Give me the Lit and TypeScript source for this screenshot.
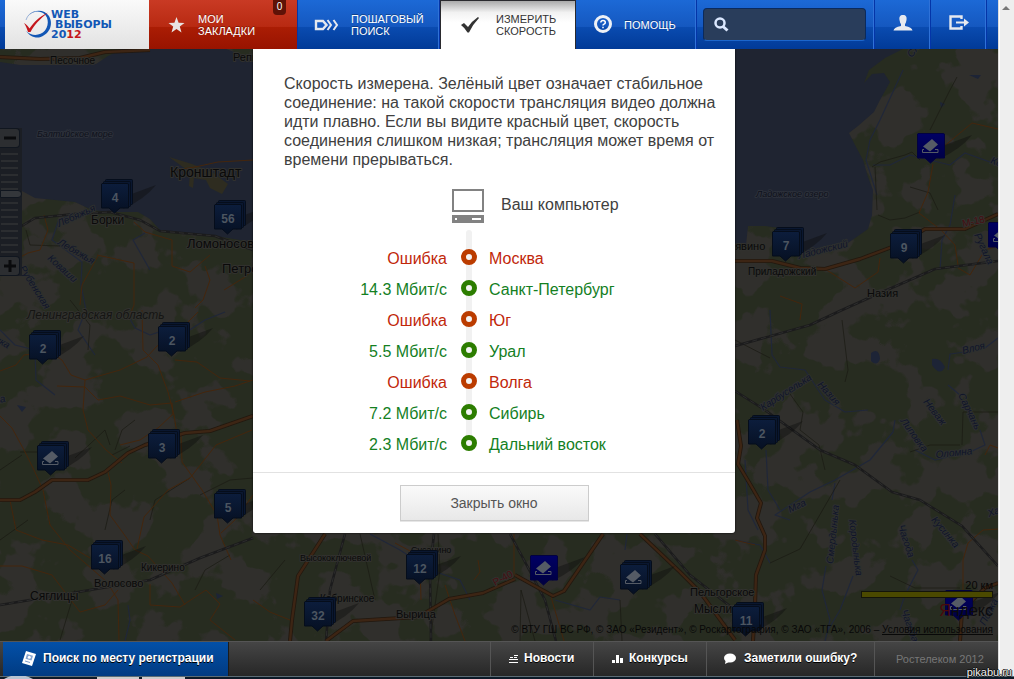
import { LitElement, html, svg, css } from "lit";
import { customElement } from "lit/decorators.js";
import { classMap } from "lit/directives/class-map.js";

type Result = { speed: string; city: string; ok: boolean };
type Pin = { x: number; y: number; n?: string; single?: boolean };
type Label = { x: number; y: number; t: string; s?: number; r?: number; kind?: string };

const RESULTS: Result[] = [
  { speed: "Ошибка", city: "Москва", ok: false },
  { speed: "14.3 Мбит/с", city: "Санкт-Петербург", ok: true },
  { speed: "Ошибка", city: "Юг", ok: false },
  { speed: "5.5 Мбит/с", city: "Урал", ok: true },
  { speed: "Ошибка", city: "Волга", ok: false },
  { speed: "7.2 Мбит/с", city: "Сибирь", ok: true },
  { speed: "2.3 Мбит/с", city: "Дальний восток", ok: true },
];

const PINS: Pin[] = [
  { x: 101, y: 183, n: "4" }, { x: 214, y: 204, n: "56" }, { x: 29, y: 334, n: "2" },
  { x: 158, y: 326, n: "2" }, { x: 148, y: 433, n: "3" }, { x: 37, y: 445 },
  { x: 214, y: 493, n: "5" }, { x: 91, y: 544, n: "16" }, { x: 406, y: 554, n: "12" },
  { x: 304, y: 601, n: "32" }, { x: 620, y: 564 }, { x: 530, y: 555, single: true },
  { x: 772, y: 231, n: "7" }, { x: 890, y: 233, n: "9" }, { x: 748, y: 419, n: "2" },
  { x: 732, y: 606, n: "11" }, { x: 917, y: 133, single: true },
  { x: 988, y: 222, single: true }, { x: 945, y: 590, single: true },
];

const LABELS: Label[] = [
  { x: 50, y: 64, t: "Песочное", s: 10 },
  { x: 233, y: 61, t: "Репино", s: 11 },
  { x: 37, y: 137, t: "Балтийское море", s: 9, kind: "sea" },
  { x: 170, y: 177, t: "Кронштадт", s: 14 },
  { x: 91, y: 224, t: "Борки", s: 12 },
  { x: 187, y: 248, t: "Ломоносов", s: 13 },
  { x: 222, y: 273, t: "Петродворец", s: 13 },
  { x: 27, y: 319, t: "Ленинградская область", s: 12, kind: "region" },
  { x: 59, y: 227, t: "Лебяжья", s: 10, r: -24, kind: "river" },
  { x: 57, y: 244, t: "Лебяжья", s: 10, r: 30, kind: "river" },
  { x: 47, y: 259, t: "Коваши", s: 10, r: 42, kind: "river" },
  { x: 19, y: 268, t: "Рубенская", s: 10, r: 58, kind: "river" },
  { x: -6, y: 341, t: "нка", s: 10, r: 30, kind: "river" },
  { x: -4, y: 404, t: "ка", s: 10, r: -14, kind: "river" },
  { x: 141, y: 571, t: "Кикерино", s: 10 },
  { x: 94, y: 587, t: "Волосово", s: 11 },
  { x: 30, y: 600, t: "Сяглицы", s: 12 },
  { x: 300, y: 561, t: "Высокоключевой", s: 9 },
  { x: 411, y: 553, t: "Сусанино", s: 9 },
  { x: 320, y: 602, t: "Кобринское", s: 10 },
  { x: 396, y: 618, t: "Вырица", s: 11 },
  { x: 495, y: 586, t: "Р-40", s: 10, r: -28, kind: "road" },
  { x: 690, y: 596, t: "Пельгорское", s: 11 },
  { x: 694, y: 613, t: "Мыслино", s: 12 },
  { x: 756, y: 197, t: "Ладожское озеро", s: 9, kind: "sea" },
  { x: 715, y: 250, t: "Синявино", s: 11 },
  { x: 748, y: 275, t: "Приладожский", s: 10 },
  { x: 799, y: 259, t: "Ладожский", s: 10, r: -14, kind: "river" },
  { x: 867, y: 297, t: "Назия", s: 11 },
  { x: 963, y: 227, t: "М-18", s: 10, r: -12, kind: "road" },
  { x: 912, y: 58, t: "Слю", s: 10, r: -55, kind: "river" },
  { x: 974, y: 235, t: "Ругала", s: 10, r: 65, kind: "river" },
  { x: 990, y: 163, t: "Кобона", s: 10, r: 20, kind: "river" },
  { x: 763, y: 411, t: "Карбуселька", s: 10, r: -33, kind: "river" },
  { x: 817, y: 385, t: "Назия", s: 10, r: 48, kind: "river" },
  { x: 963, y: 354, t: "Влоя", s: 10, r: -14, kind: "river" },
  { x: 923, y: 402, t: "Неваж", s: 10, r: 52, kind: "river" },
  { x: 958, y: 395, t: "Сарчань", s: 10, r: 64, kind: "river" },
  { x: 900, y: 421, t: "Липовка", s: 10, r: 54, kind: "river" },
  { x: 936, y: 458, t: "Оломна", s: 10, r: -6, kind: "river" },
  { x: 790, y: 513, t: "Мга", s: 10, r: -26, kind: "river" },
  { x: 833, y: 564, t: "Смердынька", s: 10, r: -84, kind: "river" },
  { x: 849, y: 520, t: "Кородынька", s: 10, r: 83, kind: "river" },
  { x: 898, y: 526, t: "Чагода", s: 10, r: 72, kind: "river" },
  { x: 931, y: 520, t: "Кусинка", s: 10, r: 50, kind: "river" },
  { x: 989, y: 517, t: "Хала", s: 10, r: -20, kind: "river" },
  { x: 901, y: 611, t: "Чагода", s: 10, r: 70, kind: "river" },
  { x: 985, y: 626, t: "Полка", s: 10, r: -62, kind: "river" },
];

const WATER = [
  "M0 62 L20 65 L60 65 L96 64 L108 56 L122 49 L226 49 L240 54 L260 62 V246 L240 240 L215 236 L180 233 L160 230 L150 219 L138 212 L110 212 L92 210 L75 202 L35 198 L22 191 L0 193Z",
  "M734 49 H903 L885 58 L869 70 L864 83 L872 74 L884 73 L890 82 L880 100 L874 112 L858 126 L849 133 L855 145 L863 160 L868 177 L873 190 L872 215 L868 229 L848 243 L820 251 L800 254 L782 252 L780 228 L765 226 L748 226 L746 245 L734 246Z",
];

const HIGHWAYS = [
  "M0 57 L40 59 L80 58 L105 52 L150 50",
  "M0 500 L20 500 L35 492 L52 480 L88 480 L105 472 L128 453 L145 445 L185 433 L210 431 L253 416",
  "M735 261 L772 261 L800 268 L825 269 L860 259 L900 244 L925 229 L965 229 L998 214",
  "M737 420 L741 446 L738 464 L750 484 L761 503 L757 518 L765 536 L765 550 L756 575 L755 605 L753 641",
  "M325 534 L298 576 L292 620 L290 641",
  "M326 641 L353 621 L418 617 L449 599 L483 593 L515 579",
  "M515 575 L553 596 L564 591 L603 534",
  "M640 534 L680 572 L700 592 L735 640",
  "M960 641 L962 610 L985 588 L998 583",
];

const ROADS = [
  "M0 371 L16 365 L24 355 L50 352 L62 360 L71 375 L85 380 L120 370 L147 357 L157 346 L180 330 L198 312",
  "M57 386 L85 387 L98 400 L120 396 L150 405 L172 403 L173 414 L158 428 L140 440 L120 445",
  "M142 310 L143 350 L158 365 L168 392 L174 415 L177 434",
  "M175 360 L197 362 L220 378 L250 381",
  "M175 402 L205 392 L235 386 L253 380",
  "M85 380 L83 410 L88 430 L106 450 L122 463",
  "M0 416 L12 428 L24 450 L34 470 L43 490 L50 525 L70 550 L107 582 L118 600 L119 641",
  "M10 500 L16 530 L42 540 L68 545 L90 558",
  "M107 468 L111 485 L110 515 L126 537 L135 550 L148 556 L172 583 L185 605",
  "M181 434 L182 462 L202 490 L217 515 L220 535 L231 560",
  "M221 533 L235 520 L253 495", "M137 549 L144 517 L168 490 L190 478 L216 445 L252 430",
  "M0 566 L22 566 L52 575 L80 612 L105 605 L118 590", "M150 584 L150 605 L180 607 L206 590 L220 604 L210 620 L235 640",
  "M97 255 L134 263 L134 305 L128 320", "M134 222 L145 232 L172 240 L172 266 L190 272 L210 255",
  "M98 256 L82 285 L80 305", "M44 215 L48 230 L40 250 L28 253 L0 268",
  "M170 171 L195 167 L218 162 L253 160", "M205 266 L210 280 L203 300 L195 308",
  "M224 290 L245 277 L253 270", "M253 600 L270 612 L290 620", "M395 543 L412 552 L420 565 L421 600",
  "M474 580 L480 572 L478 560", "M514 534 L514 575", "M445 585 L455 615 L465 641", "M551 597 L564 641",
  "M933 164 L928 192 L919 213 L941 230 L955 245 L958 265", "M942 148 L972 123 L998 129",
  "M958 268 L970 275 L985 250 L998 246", "M825 269 L855 288 L878 272 L880 258",
  "M780 296 L802 304 L800 320", "M968 543 L963 560 L963 590", "M968 543 L983 530 L998 529",
  "M735 540 L755 545 M985 455 L990 445 L998 448",
];

const TRACKS = [
  "M26 230 L30 245 L60 246 M70 300 L90 325 L88 350 M115 450 L122 430 L135 420 M130 446 L112 455",
  "M75 458 L105 430 L110 445 M60 470 L48 452 L20 452 M125 490 L112 500 L105 530",
  "M150 520 L155 500 L190 478 M200 495 L230 480 L253 478 M195 590 L205 570 L230 555",
  "M735 340 L770 358 M842 320 L848 370 L845 382 M790 394 L803 412 L800 430 L819 445 L825 470",
  "M872 167 L880 162 L905 155 L912 152 L920 160 M878 215 L890 220 L905 218 L920 212",
  "M930 130 L950 90 L957 77 M910 187 L930 193 L938 210 M875 167 L877 210",
  "M963 412 L980 412 L998 412 M963 412 L962 445 M910 452 L930 445 L960 445",
  "M890 576 L915 588 L940 588 L960 588 M770 563 L800 549 L840 480",
  "M520 641 L521 590 L535 641 M430 641 L440 570 L438 534 M620 600 L622 641",
  "M0 470 L22 455 M0 540 L28 520 M60 640 L75 590 M260 590 L285 560 M360 534 L375 600",
];

const RAILS = [
  "M0 239 L35 218 L75 214 L110 212 L140 220 L160 231 L215 236 L253 250",
  "M0 605 L60 595 L150 580 L200 558 L253 538",
  "M735 346 L810 325 L842 310 L880 293 L935 269 L998 261",
  "M735 391 L765 410 L820 450 L855 465 L892 492 L920 500 L962 526 L998 566",
  "M345 534 L330 590 L326 641", "M434 534 L430 570 L431 641", "M510 534 L524 560 L545 600 L556 641",
  "M655 534 L690 575 L735 610",
];

const RIVERS = [
  "M70 214 L58 222 L52 240 L82 262 L81 285 L86 310 L78 330 L95 355",
  "M125 310 L135 328 L150 335 L165 330 L185 333 L205 320 L225 312",
  "M0 330 L15 345 L35 350 L36 380 L55 395", "M150 270 L133 240 L145 233", "M128 605 L130 620 L125 641",
  "M770 310 L772 355 L780 367 L805 370 L825 400 L845 412 L868 410", "M895 420 L893 432 L870 460 L835 480 L810 492 L775 515 L790 520",
  "M766 450 L768 490 L780 510", "M835 483 L832 500 M826 566 L822 590 L830 620 L825 641 M853 576 L840 610 L828 630",
  "M912 560 L918 570 L905 595 L900 610", "M948 370 L950 354 L965 352 M985 348 L998 338",
  "M948 385 L960 395 M980 430 L985 445 L970 452 L935 460 L915 450", "M873 165 L890 165 L910 155 L950 165 L965 153 L998 165",
  "M903 70 L880 120 L870 140 L866 160 L877 195", "M955 195 L950 225 L942 240 L940 270",
  "M370 534 L400 550 L430 570 L460 580 L470 600", "M555 600 L590 610 L600 597 L620 600 M627 534 L625 550",
  "M735 540 L760 545 L770 563 M745 460 L748 510 L758 530",
];

@customElement("vote-map")
export class VoteMap extends LitElement {
  static styles = css`
    :host { display: block; position: absolute; inset: 0; overflow: hidden; background: #272c20; font-family: "Liberation Sans", Arial, sans-serif; }
    .canvas { display: block; width: 100%; height: 100%; }
    .water { fill: #1f2431; }
    .line { fill: none; stroke-linejoin: round; }
    .casing { stroke: #22180f; stroke-width: 4; }
    .highway { stroke: #3d2514; stroke-width: 2.4; }
    .road { stroke: #44260d; stroke-width: 1; }
    .track { stroke: #191913; stroke-width: 1; opacity: .7; }
    .rail { stroke: #1b1b1c; stroke-width: 2.5; }
    .ties { stroke: #2c2c2c; stroke-width: 1; stroke-dasharray: 5 4; }
    .river { stroke: #202739; stroke-width: 1.2; }
    .label { fill: #0a0a0a; stroke: #31312e; stroke-width: 2; paint-order: stroke; stroke-linejoin: round; }
    .sea { fill: #0e111a; stroke: #2c303a; font-style: italic; }
    .river-name { fill: #10152a; stroke: #2e302f; font-style: italic; }
    .region { fill: #151513; font-style: italic; }
    .road-name { fill: #460f12; }
    .count { fill: #4c5560; font-size: 12px; font-weight: bold; text-anchor: middle; }
    .zoom { position: absolute; left: 0; top: 79px; width: 22px; display: flex; flex-direction: column; background: #1b1e24; }
    .step { box-sizing: border-box; width: 20px; height: 20px; padding: 0; border: 1px solid #10161f; border-left: 0; border-radius: 0 4px 4px 0; background: #2c2e31; display: grid; place-items: center; }
    .range { appearance: none; -webkit-appearance: none; writing-mode: vertical-lr; width: 22px; height: 108px; margin: 0; background: repeating-linear-gradient(#0000 0 5px, #2b2d30 5px 7px) 1px 0 / 17px 100% no-repeat; }
    .range::-webkit-slider-thumb { appearance: none; -webkit-appearance: none; box-sizing: border-box; width: 22px; height: 8px; border: 1px solid #10161f; border-radius: 0 4px 4px 0; background: #34373b; }
    .legend { position: absolute; right: 5px; bottom: 5px; display: flex; flex-direction: column; align-items: flex-end; color: #080808; font-size: 10px; line-height: 12px; white-space: nowrap; }
    .scale { font-size: 11px; line-height: 12px; }
    .bar { box-sizing: border-box; width: 132px; height: 7px; border: 1px solid #14140a; background: #4b4900; }
    .brand { font-size: 16px; line-height: 26px; color: #0b0b0d; }
    .brand-mark { color: #4a090c; }
    .terms { color: inherit; }
  `;

  private pin(p: Pin) {
    const fill = p.single ? "url(#bright)" : "url(#dim)";
    const edge = p.single ? "#020240" : "#050d1b";
    return svg`<g transform="translate(${p.x} ${p.y})">
      <path d="M28 12 L55 2 Q44 16 22 26Z" fill="#0c0d0c" opacity=".4"></path>
      ${p.single ? null : svg`<rect x="4.5" y="-3.5" width="27" height="25" rx="1" fill="#0a1730" stroke=${edge}></rect>
        <rect x="2.5" y="-1.5" width="27" height="25" rx="1" fill="#0a1730" stroke=${edge}></rect>`}
      <path d="M1 .5 H26 L27.5 1 V25 H19 L13.500 30 L8 25 H.5 V1Z" fill=${fill} stroke=${edge}></path>
      ${p.n
        ? svg`<text class="count" x="14" y="19">${p.n}</text>`
        : svg`<path d="M6 13.500 L15 6 L21 11.500 L13 18.500Z" fill="#555b65"></path>
            <path d="M7 16.500 H5.500 V19.500 H21 V16.500 H18" fill="none" stroke="#555b65"></path>`}
    </g>`;
  }

  private label(l: Label) {
    const cls = classMap({ label: true, sea: l.kind === "sea", "river-name": l.kind === "river", region: l.kind === "region", "road-name": l.kind === "road" });
    return svg`<text class=${cls} font-size=${l.s ?? 11} transform="translate(${l.x} ${l.y}) rotate(${l.r ?? 0})">${l.t}</text>`;
  }

  private lines(cls: string, list: string[]) {
    return list.map((d) => svg`<path class="line ${cls}" d=${d}></path>`);
  }

  render() {
    return html`
      <svg class="canvas" viewBox="0 49 998 592" preserveAspectRatio="xMidYMid slice" role="img" aria-label="Карта">
        <defs>
          <linearGradient id="dim" x2="0" y2="1"><stop stop-color="#0c1d3c"></stop><stop offset="1" stop-color="#061022"></stop></linearGradient>
          <linearGradient id="bright" x2="0" y2="1"><stop stop-color="#000064"></stop><stop offset="1" stop-color="#000040"></stop></linearGradient>
          <filter id="fields" x="0" y="0" width="1" height="1" color-interpolation-filters="sRGB">
            <feTurbulence type="fractalNoise" baseFrequency=".022" numOctaves="4" seed="11"></feTurbulence>
            <feColorMatrix values="0 0 0 0 .188  0 0 0 0 .184  0 0 0 0 .172  22 0 0 0 -11.200"></feColorMatrix>
          </filter>
        </defs>
        <rect y="49" width="998" height="592" fill="#272c20"></rect>
        <rect y="49" width="998" height="592" filter="url(#fields)"></rect>
        ${WATER.map((d) => svg`<path class="water" d=${d}></path>`)}
        <path d="M169 157 L192 164 L212 172 L228 184 L222 194 L210 188 L206 180 L194 178 L193 188 L189 186 L190 172Z" fill="#2e2c20"></path>
        <path d="M17 405 L26 407 L22 412Z M871 353 q8 -6 9 6 q-3 8 -9 2Z M932 359 q8 -2 13 8 q-5 10 -13 -2Z M969 75 h12 l-3 4Z M940 102 l5 2 l-4 4Z M216 593 l7 3 l-6 3Z" fill="#1d2436"></path>
        ${this.lines("river", RIVERS)}${this.lines("track", TRACKS)}${this.lines("road", ROADS)}
        ${this.lines("rail", RAILS)}${this.lines("ties", RAILS)}
        ${this.lines("casing", HIGHWAYS)}${this.lines("highway", HIGHWAYS)}
        ${LABELS.map((l) => this.label(l))}
        ${PINS.map((p) => this.pin(p))}
      </svg>
      <div class="zoom">
        <button class="step" aria-label="Отдалить"><svg width="14" height="14"><path d="M1 7 H13" stroke="#0a0b0d" stroke-width="3"></path></svg></button>
        <input class="range" type="range" aria-label="Масштаб" min="0" max="100" value="42" />
        <button class="step" aria-label="Приблизить"><svg width="14" height="14"><path d="M1 7 H13 M7 1 V13" stroke="#0a0b0d" stroke-width="3"></path></svg></button>
      </div>
      <div class="legend">
        <span class="scale">20 км</span>
        <span class="bar"></span>
        <span class="brand"><span class="brand-mark">Я</span>ндекс</span>
        <span>© ВТУ ГШ ВС РФ, © ЗАО «Резидент», © Роскартография, © ЗАО «ТГА», 2006 – <a class="terms" href="#terms">Условия использования</a></span>
      </div>
    `;
  }
}

@customElement("speed-dialog")
export class SpeedDialog extends LitElement {
  static styles = css`
    :host { display: block; position: relative; width: 482px; background: #fff; border-radius: 0 0 3px 3px; color: #404040; font: 16px/19px "Liberation Sans", Arial, sans-serif; box-shadow: 0 0 2px #000; }
    .intro { margin: 0; padding: 25px 10px 20px 31px; }
    .source { display: flex; gap: 17px; align-items: center; padding-left: 199px; }
    .source-name { padding-bottom: 4px; }
    .computer { display: block; }
    .track { position: relative; margin-top: 20px; padding-bottom: 12px; }
    .track::before { content: ""; position: absolute; left: 213px; top: -13px; bottom: 30px; width: 6px; border-radius: 3px; background: #f1f1f1; }
    .results { position: relative; width: 100%; table-layout: fixed; border-collapse: collapse; }
    .row { height: 31px; color: #c1270a; }
    .ok { color: #14801f; }
    .speed, .mark, .city { padding: 0; font-weight: normal; }
    .speed { width: 194px; text-align: right; }
    .mark { width: 42px; }
    .city { text-align: left; }
    .dot { display: block; box-sizing: border-box; width: 16px; height: 16px; margin: 0 auto 4px 14px; border: 5px solid #bb3c00; border-radius: 50%; background: #f4f4f4; }
    .ok .dot { border-color: #2c7d00; }
    .actions { display: flex; justify-content: center; padding: 12px; border-top: 1px solid #e2e2e2; }
    .close { box-sizing: border-box; width: 189px; height: 36px; padding: 0; border: 1px solid #ccc; background: linear-gradient(#fafafa, #e8e8e8); box-shadow: 0 1px #e6e6e6; color: #555; font: 14px/17px "Liberation Sans", Arial, sans-serif; }
  `;

  render() {
    return html`
      <p class="intro">Скорость измерена. Зелёный цвет означает стабильное соединение: на такой скорости трансляция видео должна идти плавно. Если вы видите красный цвет, скорость соединения слишком низкая; трансляция может время от времени прерываться.</p>
      <div class="source">
        <svg class="computer" width="32" height="34" aria-hidden="true">
          <path d="M1 1 H31 V22 H1Z" fill="#fff" stroke="#828282" stroke-width="2"></path>
          <path d="M0 26 H32 V34 H0Z" fill="#828282"></path><path d="M3 29 H5 V31 H3Z M20 29 H29 V31 H20Z" fill="#fff"></path>
        </svg>
        <span class="source-name">Ваш компьютер</span>
      </div>
      <div class="track">
        <table class="results" aria-label="Скорость соединения">
          <tbody>
            ${RESULTS.map((r) => html`<tr class=${classMap({ row: true, ok: r.ok })}>
              <td class="speed">${r.speed}</td><td class="mark"><span class="dot"></span></td><th class="city" scope="row">${r.city}</th>
            </tr>`)}
          </tbody>
        </table>
      </div>
      <div class="actions"><button class="close">Закрыть окно</button></div>
    `;
  }
}

@customElement("app-root")
export class AppRoot extends LitElement {
  static styles = css`
    :host { display: grid; grid-template: minmax(0, 1fr) 3px / minmax(0, 1fr) 16px; height: 100vh; position: relative; overflow: hidden; font-family: "Liberation Sans", Arial, sans-serif; }
    .page { display: grid; grid-template-rows: 49px minmax(0, 1fr) 35px; min-width: 0; }
    .header { display: flex; background: linear-gradient(#1c69d6, #1558c0 54%, #0a4bb0 56%, #013a97); padding-left: 5px; }
    .logo { flex: 0 0 144px; background: linear-gradient(#fafafa, #e2e2e2); }
    .logo-art { display: block; }
    .logo-text { font: bold 11px "DejaVu Sans", sans-serif; fill: #1257b5; }
    .logo-year { fill: #c4161c; }
    .tab { position: relative; box-sizing: border-box; display: flex; align-items: center; flex: none; border-right: 1px solid #0435a8; box-shadow: inset -1px 0 #2f72d8; color: #fff; font-size: 11px; line-height: 12px; text-decoration: none; text-shadow: 0 -1px #0005; }
    .bookmarks { width: 149px; padding-left: 19px; gap: 13px; background: linear-gradient(#c93a24, #b82a12 54%, #aa1d04 56%, #981300); box-shadow: none; }
    .badge { position: absolute; right: 11px; top: 0; width: 13px; height: 15px; border-radius: 0 0 4px 4px; background: #5f1207; font-size: 10px; line-height: 13px; text-align: center; }
    .steps { width: 142px; padding-left: 16px; gap: 11px; }
    .measure { width: 136px; padding-left: 20px; gap: 17px; background: linear-gradient(#aaa, #f2f2f2 24%, #fff 45%); border: 1px solid #2a2a2e; border-bottom: 0; color: #333; box-shadow: none; text-shadow: none; }
    .help { width: 121px; padding-left: 17px; gap: 11px; }
    .search { box-sizing: border-box; width: 178px; display: flex; align-items: center; padding: 0 8px 0 6px; border-right: 1px solid #0435a8; box-shadow: inset -1px 0 #2f72d8; }
    .field { box-sizing: border-box; flex: 1; min-width: 0; height: 33px; display: flex; align-items: center; gap: 6px; padding: 0 10px; border: 1px solid #0b2a5c; border-bottom-color: #1c66cc; border-radius: 4px; background: #293d5b; }
    .query { flex: 1; min-width: 0; border: 0; padding: 0; outline: 0; background: none; color: #fff; font: 13px "Liberation Sans", Arial, sans-serif; }
    .tool { width: 56px; justify-content: center; padding-bottom: 3px; }
    .stage { position: relative; display: flex; justify-content: center; align-items: flex-start; padding-right: 10px; overflow: hidden; }
    .footer { display: flex; background: linear-gradient(#454545, #272727); border-top: 1px solid #555; box-sizing: border-box; padding-left: 3px; color: #fff; font-size: 12px; line-height: 14px; }
    .entry { box-sizing: border-box; display: flex; align-items: center; gap: 6px; padding: 0 0 2px 18px; border-left: 1px solid #555; color: #fff; font-weight: bold; text-decoration: none; text-shadow: 0 1px #000; }
    .lookup { width: 226px; margin-right: auto; border-left: 0; border-right: 1px solid #1c1c1c; background: linear-gradient(#0350a8, #013b82); }
    .news { width: 103px; }
    .contests { width: 113px; }
    .mistake { width: 168px; padding-left: 17px; gap: 8px; }
    .owner { box-sizing: border-box; width: 124px; padding-left: 21px; display: flex; align-items: center; border-left: 1px solid #555; color: #777; font-size: 11px; }
    .rail { background: linear-gradient(90deg, #ddd 1px, #fff 1px 2px, #eee 2px); display: flex; justify-content: center; padding-top: 6px; }
    .arrow { display: block; }
    .taskbar { grid-column: 1 / -1; display: block; width: 100%; height: 3px; background: linear-gradient(#5c6c74 1px, #0c1a28 1px); }
    .mark { position: absolute; right: 2px; bottom: 1px; color: #eee; font-size: 11px; line-height: 12px; text-shadow: 1px 0 #111, -1px 0 #111, 0 1px #111, 0 -1px #111; }
  `;

  render() {
    return html`
      <div class="page">
        <header class="header">
          <a class="logo" href="#home" aria-label="Веб-выборы 2012">
            <svg class="logo-art" width="144" height="49">
              <path d="M21 20 A12.500 12.500 0 0 1 30 11.500" fill="none" stroke="#9db4d8" stroke-width="1"></path>
              <path d="M23 16 C29 9 39 9 44 16 C49 25 44 35 34 37.500 C28 38 24 35 21 31 C27 36.500 35 36 40 30.500 C45 24 43 15 37 12.500 C31 10 27 12 23 16Z" fill="#1257b5"></path>
              <path d="M19 23 C21 24 23 26 24.500 28.500 C29 22 34 17 43 12.500 C35 19 29 25 25.500 32 H23 C22 29 21 26 19 23Z" fill="#c4161c"></path>
              <text class="logo-text" x="46" y="18">WEB</text>
              <text class="logo-text" x="50" y="28">ВЫБОРЫ</text>
              <text class="logo-text" x="46" y="38">20<tspan class="logo-year">12</tspan></text>
            </svg>
          </a>
          <a class="tab bookmarks" href="#bookmarks">
            <svg width="17" height="16" viewBox="0 0 17 16"><path d="M8.500 0 L10.600 5.800 L16.500 6 L11.800 9.600 L13.500 15.500 L8.500 12 L3.500 15.500 L5.200 9.600 L.5 6 L6.400 5.800Z" fill="#e8e4e2"></path></svg>
            <span>МОИ<br />ЗАКЛАДКИ</span><span class="badge">0</span>
          </a>
          <a class="tab steps" href="#steps">
            <svg width="26" height="14" viewBox="0 0 26 14"><path d="M2 3 H9 L12.500 7 L9 11 H2Z" fill="none" stroke="#e6e9ef" stroke-width="2.400"></path><path d="M13.500 2 L17 7 L13.500 12 M19.500 2 L23 7 L19.500 12" fill="none" stroke="#e6e9ef" stroke-width="2"></path></svg>
            <span>ПОШАГОВЫЙ<br />ПОИСК</span>
          </a>
          <a class="tab measure" href="#speed" aria-current="page">
            <svg width="18" height="16" viewBox="0 0 18 16"><path d="M0 8 L3 6 L7 10 Q11 4 17 0 L18 1 Q12 7 8 15.500 H6.500 Q4 11 0 8Z" fill="#333"></path></svg>
            <span>ИЗМЕРИТЬ<br />СКОРОСТЬ</span>
          </a>
          <a class="tab help" href="#help">
            <svg width="20" height="20" viewBox="0 0 20 20"><circle cx="10" cy="9" r="7.500" fill="none" stroke="#eef1f6" stroke-width="3"></circle><path d="M7.800 7.500 Q8 5.500 10 5.500 Q12.300 5.500 12.300 7.400 Q12.300 8.500 11 9.200 Q10 9.700 10 10.600 M10 11.800 V13.300" fill="none" stroke="#fff" stroke-width="1.500"></path></svg>
            <span>ПОМОЩЬ</span>
          </a>
          <form class="search" role="search">
            <label class="field">
              <svg width="15" height="15" viewBox="0 0 15 15" aria-label="Поиск"><circle cx="6" cy="6" r="4.500" fill="none" stroke="#dbe8ff" stroke-width="2.500"></circle><path d="M9 9.500 L13.500 13.500" stroke="#dbe8ff" stroke-width="3"></path></svg>
              <input class="query" type="text" aria-label="Поиск" />
            </label>
          </form>
          <a class="tab tool" href="#profile" aria-label="Профиль">
            <svg width="20" height="16" viewBox="0 0 20 16"><path d="M10 0 C13 0 14 2 13.500 5 Q13 8 12 9 V11 Q19 12 19.500 15.500 H.5 Q1 12 8 11 V9 Q7 8 6.500 5 C6 2 7 0 10 0Z" fill="#e6e9ef"></path></svg>
          </a>
          <a class="tab tool" href="#exit" aria-label="Выход">
            <svg width="20" height="16" viewBox="0 0 20 16"><path d="M12.500 4 V1.500 H1.500 V13.500 H12.500 V11" fill="none" stroke="#e6e9ef" stroke-width="2.400"></path><path d="M7 6.500 H15 V3.500 L20 7.500 L15 11.500 V8.500 H7Z" fill="#e6e9ef"></path></svg>
          </a>
        </header>
        <main class="stage"><vote-map></vote-map><speed-dialog role="dialog" aria-label="Измерить скорость"></speed-dialog></main>
        <footer class="footer">
          <a class="entry lookup" href="#lookup">
            <svg width="16" height="17" viewBox="0 0 16 17"><path d="M5 1 L15 4 L11 16 L1 13Z" fill="#fff"></path><path d="M6 4 L12 5.800 L10.500 10.500 L4.500 8.700Z" fill="#86a5d2"></path><circle cx="8.300" cy="7.300" r="1.500" fill="#fff"></circle><path d="M4 11 L9 12.500" stroke="#7c9dcc"></path></svg>
            Поиск по месту регистрации
          </a>
          <a class="entry news" href="#news"><svg width="9" height="9"><path d="M0 8.500 H9 M0 5.500 H9 M1 3.500 H4 M5 3.500 H8 M5 1.500 H9" stroke="#fff"></path></svg>Новости</a>
          <a class="entry contests" href="#contests"><svg width="11" height="9"><path d="M0 6 H3 V9 H0Z M4 1 H7 V9 H4Z M8 4 H11 V9 H8Z" fill="#fff"></path></svg>Конкурсы</a>
          <a class="entry mistake" href="#mistake"><svg width="12" height="11"><ellipse cx="6" cy="5" rx="6" ry="4.500" fill="#fff"></ellipse><path d="M2 6 L1 11 L7 8Z" fill="#fff"></path></svg>Заметили ошибку?</a>
          <span class="owner">Ростелеком 2012</span>
        </footer>
      </div>
      <div class="rail"><svg class="arrow" width="8" height="5"><path d="M4 0 L8 4 H0Z" fill="#777"></path></svg></div>
      <svg class="taskbar" aria-hidden="true"><path d="M4 3 Q18 -5 33 3Z" fill="#b8c4d2"></path><path d="M97 1 H139 V3 H97Z M142 1 H185 V3 H142Z" fill="#ccc"></path></svg>
      <span class="mark">pikabu.ru</span>
    `;
  }
}
